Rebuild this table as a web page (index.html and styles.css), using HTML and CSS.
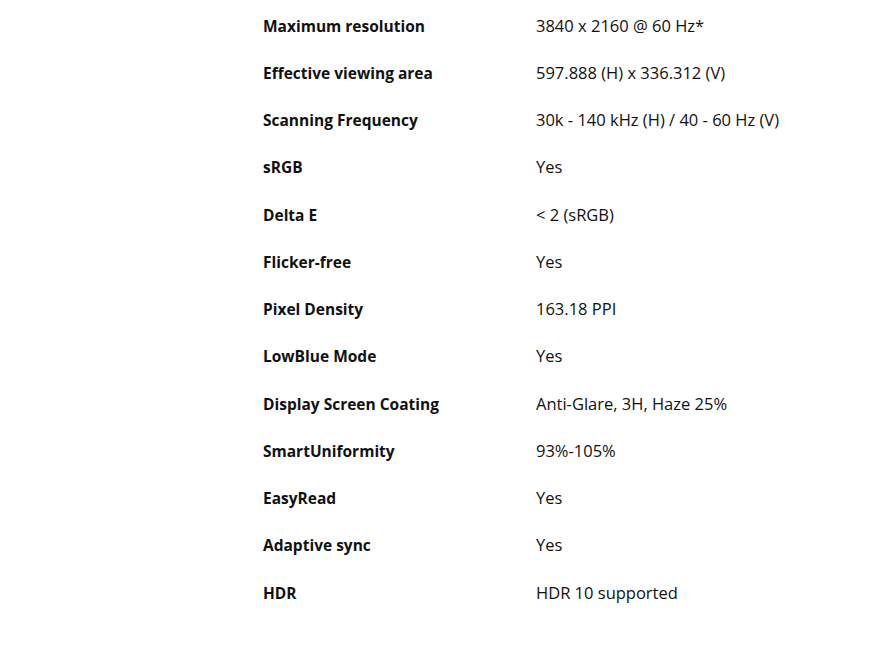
FILE: index.html
```html
<!DOCTYPE html>
<html lang="en">
<head>
<meta charset="utf-8">
<title>Specifications</title>
<link rel="stylesheet" href="styles.css">
</head>
<body>
<div class="specs">
  <div class="row"><div class="label">Maximum resolution</div><div class="value">3840 x 2160 @ 60 Hz*</div></div>
  <div class="row"><div class="label">Effective viewing area</div><div class="value">597.888 (H) x 336.312 (V)</div></div>
  <div class="row"><div class="label">Scanning Frequency</div><div class="value">30k - 140 kHz (H) / 40 - 60 Hz (V)</div></div>
  <div class="row"><div class="label">sRGB</div><div class="value">Yes</div></div>
  <div class="row"><div class="label">Delta E</div><div class="value">&lt; 2 (sRGB)</div></div>
  <div class="row"><div class="label">Flicker-free</div><div class="value">Yes</div></div>
  <div class="row"><div class="label">Pixel Density</div><div class="value">163.18 PPI</div></div>
  <div class="row"><div class="label">LowBlue Mode</div><div class="value">Yes</div></div>
  <div class="row"><div class="label">Display Screen Coating</div><div class="value">Anti-Glare, 3H, Haze 25%</div></div>
  <div class="row"><div class="label">SmartUniformity</div><div class="value">93%-105%</div></div>
  <div class="row"><div class="label">EasyRead</div><div class="value">Yes</div></div>
  <div class="row"><div class="label">Adaptive sync</div><div class="value">Yes</div></div>
  <div class="row"><div class="label">HDR</div><div class="value">HDR 10 supported</div></div>
</div>
</body>
</html>
```
FILE: styles.css
```css
html, body {
  margin: 0;
  padding: 0;
  background: #ffffff;
}
body {
  font-family: "Open Sans", "Noto Sans", "Liberation Sans", sans-serif;
  color: #111111;
}
.specs {
  margin-left: 263px;
  padding-top: 2px;
  display: flex;
  flex-direction: column;
}
.row {
  display: grid;
  grid-template-columns: 273px 1fr;
  align-items: center;
  height: 47.25px;
}
.label {
  font-size: 15.5px;
  font-weight: 700;
  line-height: 22px;
}
.value {
  font-size: 16.5px;
  font-weight: 400;
  line-height: 22px;
}
```
